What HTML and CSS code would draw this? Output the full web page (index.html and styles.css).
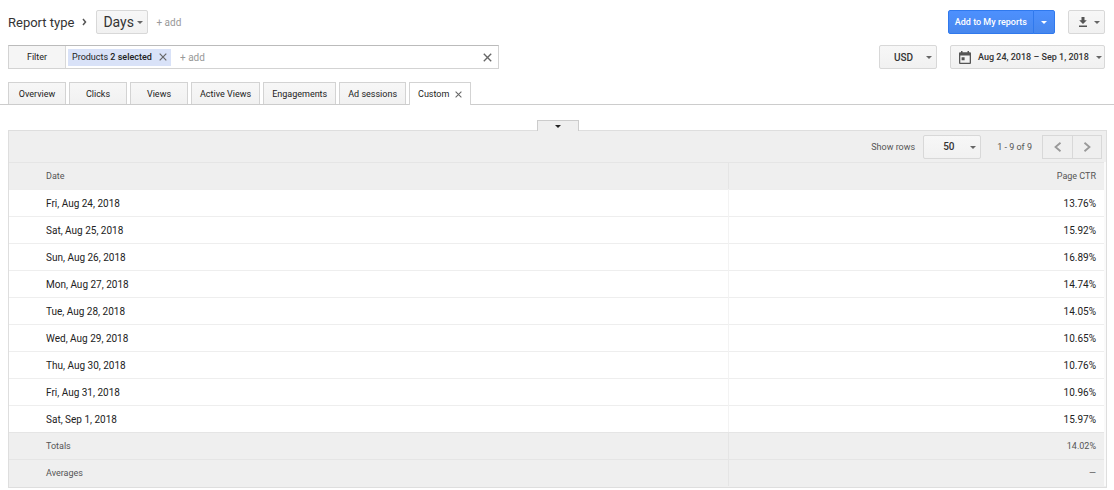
FILE: index.html
```html
<!DOCTYPE html>
<html lang="en">
<head>
    <meta charset="UTF-8">
    <meta name="viewport" content="width=device-width, initial-scale=1.0">
    <title>Report - Days</title>
    <link rel="stylesheet" href="styles.css">
</head>
<body>
    <header class="bar report-bar">
        <div class="report-type">
            <label for="reportType">Report type</label>
            <svg class="crumb" width="5" height="8" viewBox="0 0 5 8"><path d="M1 1L3.5 4L1 7"/></svg>
            <span class="select days">
                <select id="reportType"><option>Days</option></select>
            </span>
            <button class="add">+ add</button>
        </div>
        <div class="actions">
            <div class="split-btn">
                <button class="primary">Add to My reports</button>
                <button class="primary more" aria-label="More options"><span class="caret"></span></button>
            </div>
            <button class="btn download" aria-label="Download">
                <svg width="10" height="10" viewBox="0 0 10 10"><path d="M3.5 0h3v3.2h2.3L5 7 1.2 3.2h2.3zM1 8.6h8V10H1z"/></svg>
                <span class="caret"></span>
            </button>
        </div>
    </header>

    <div class="bar filter-bar">
        <div class="filter">
            <label class="filter-label" for="filterText">Filter</label>
            <span class="chip">
                <span>Products <b>2 selected</b></span>
                <button class="close" aria-label="Remove Products"><svg width="8" height="8" viewBox="0 0 8 8"><path d="M0.7 0.7L7.3 7.3M7.3 0.7L0.7 7.3"/></svg></button>
            </span>
            <input id="filterText" class="filter-input" type="text" placeholder="+ add">
            <button class="close clear" aria-label="Clear filter"><svg width="9" height="9" viewBox="0 0 8 8"><path d="M0.7 0.7L7.3 7.3M7.3 0.7L0.7 7.3"/></svg></button>
        </div>
        <div class="range">
            <span class="select currency">
                <select aria-label="Currency"><option>USD</option></select>
            </span>
            <button class="btn dates">
                <svg width="12" height="13" viewBox="0 0 12 13"><path fill-rule="evenodd" d="M2 0h1.5v1.3h5V0H10v1.3h1q1 0 1 1V12q0 1-1 1H1q-1 0-1-1V2.300q0-1 1-1h1zM1.300 4.500v7.200h9.400V4.500zM2.600 6.200h3v3h-3z"/></svg>
                <span>Aug 24, 2018 – Sep 1, 2018</span>
                <span class="caret"></span>
            </button>
        </div>
    </div>

    <nav class="tabs">
        <button class="tab">Overview</button>
        <button class="tab">Clicks</button>
        <button class="tab">Views</button>
        <button class="tab">Active Views</button>
        <button class="tab">Engagements</button>
        <button class="tab">Ad sessions</button>
        <div class="tab active">
            <span>Custom</span>
            <button class="close" aria-label="Close Custom"><svg width="7" height="7" viewBox="0 0 8 8"><path d="M0.7 0.7L7.3 7.3M7.3 0.7L0.7 7.3"/></svg></button>
        </div>
    </nav>

    <main class="report">
        <button class="expander" aria-label="Show chart"><span class="caret"></span></button>
        <div class="panel">
            <div class="pager">
                <label for="rowCount">Show rows</label>
                <span class="select rows">
                    <select id="rowCount"><option>50</option></select>
                </span>
                <span class="count">1 - 9 of 9</span>
                <div class="pages">
                    <button aria-label="Previous page"><svg width="8" height="10" viewBox="0 0 8 10"><path d="M6.500 0.700L1.500 5L6.500 9.300"/></svg></button>
                    <button aria-label="Next page"><svg width="8" height="10" viewBox="0 0 8 10"><path d="M1.500 0.700L6.500 5L1.500 9.300"/></svg></button>
                </div>
            </div>
            <div class="table-wrap">
                <table>
                    <thead>
                        <tr><th>Date</th><th>Page CTR</th></tr>
                    </thead>
                    <tbody>
                        <tr><td>Fri, Aug 24, 2018</td><td>13.76%</td></tr>
                        <tr><td>Sat, Aug 25, 2018</td><td>15.92%</td></tr>
                        <tr><td>Sun, Aug 26, 2018</td><td>16.89%</td></tr>
                        <tr><td>Mon, Aug 27, 2018</td><td>14.74%</td></tr>
                        <tr><td>Tue, Aug 28, 2018</td><td>14.05%</td></tr>
                        <tr><td>Wed, Aug 29, 2018</td><td>10.65%</td></tr>
                        <tr><td>Thu, Aug 30, 2018</td><td>10.76%</td></tr>
                        <tr><td>Fri, Aug 31, 2018</td><td>10.96%</td></tr>
                        <tr><td>Sat, Sep 1, 2018</td><td>15.97%</td></tr>
                    </tbody>
                    <tfoot>
                        <tr><td>Totals</td><td>14.02%</td></tr>
                        <tr><td>Averages</td><td>—</td></tr>
                    </tfoot>
                </table>
            </div>
        </div>
    </main>
</body>
</html>
```
FILE: styles.css
```css
* {
    box-sizing: border-box;
}

body {
    margin: 0;
    padding-top: 10px;
    font-family: Roboto, Arial, sans-serif;
    font-size: 9px;
    color: #222;
    background-color: #fff;
}

button,
input,
select {
    margin: 0;
    padding: 0;
    border: none;
    background: none;
    font: inherit;
    color: inherit;
}

button {
    cursor: pointer;
    white-space: nowrap;
}

svg {
    display: block;
    flex: none;
}

b {
    font-weight: 500;
}

.caret {
    border: 3px solid transparent;
    border-top-color: #666;
    border-bottom: none;
}

.bar {
    display: flex;
    justify-content: space-between;
    padding: 0 9px 0 8px;
}

.report-bar {
    margin-bottom: 11px;
}

.report-type,
.actions,
.range,
.split-btn {
    display: flex;
    align-items: center;
}

.report-type {
    font-size: 13px;
    color: #333;
}

.crumb {
    margin: 0 9px 0 8px;
    fill: none;
    stroke: #555;
    stroke-width: 1.5;
}

/* Buttons and drop-downs */
.btn,
.select {
    height: 24px;
    border: 1px solid #d8d8d8;
    border-radius: 2px;
    background: linear-gradient(#f7f7f7, #f1f1f1);
}

.btn {
    display: flex;
    align-items: center;
}

.select {
    position: relative;
    display: block;
    font-size: 10px;
}

.select select {
    width: 100%;
    height: 100%;
    appearance: none;
    cursor: pointer;
}

.select::after {
    content: "";
    position: absolute;
    right: 4px;
    top: 10px;
    border: 3px solid transparent;
    border-top-color: #666;
    border-bottom: none;
    pointer-events: none;
}

.days {
    width: 52px;
    font-size: 14px;
}

.days select {
    padding-left: 6px;
}

.add {
    margin-left: 8px;
    font-size: 10px;
    color: #999;
}

.primary {
    height: 24px;
    padding: 0 6px;
    border: 1px solid #3079ed;
    border-radius: 2px 0 0 2px;
    background: linear-gradient(#4d90fe, #4787ed);
    color: #fff;
    font-weight: 500;
}

.primary.more {
    display: flex;
    align-items: center;
    justify-content: center;
    width: 22px;
    margin-left: -1px;
    border-radius: 0 2px 2px 0;
}

.primary .caret {
    border-top-color: #fff;
}

.download {
    justify-content: space-between;
    width: 37px;
    margin-left: 13px;
    padding: 0 4px 0 9px;
}

.btn svg {
    fill: #555;
}

/* Filter row */
.filter-bar {
    margin-bottom: 13px;
}

.filter {
    display: flex;
    align-items: center;
    width: 491px;
    height: 24px;
    border: 1px solid #d3d3d3;
    border-top-color: #bbb;
}

.filter-label {
    width: 57px;
    height: 100%;
    border-right: 1px solid #d8d8d8;
    background-color: #f5f5f5;
    line-height: 22px;
    text-align: center;
}

.chip {
    display: flex;
    align-items: center;
    justify-content: space-between;
    width: 103px;
    height: 17px;
    margin-left: 2px;
    padding: 0 4px;
    background-color: #d9e2f8;
    white-space: nowrap;
}

.close svg {
    fill: none;
    stroke: #666;
    stroke-width: 1.2;
}

.filter-input {
    flex: 1;
    min-width: 0;
    margin-left: 9px;
    font-size: 10px;
}

.filter-input::placeholder {
    color: #999;
    opacity: 1;
}

.clear {
    margin-right: 6px;
}

.range {
    color: #333;
    font-weight: 500;
}

.currency {
    width: 58px;
}

.currency select {
    padding-left: 14px;
}

.dates {
    gap: 7px;
    width: 155px;
    margin-left: 13px;
    padding: 0 4px 0 8px;
}

.dates .caret {
    margin-left: auto;
}

/* Tabs */
.tabs {
    display: flex;
    gap: 3px;
    height: 23px;
    padding-left: 8px;
    border-bottom: 1px solid #ccc;
}

.tab {
    height: 22px;
    min-width: 58px;
    padding: 0 8px;
    border: 1px solid #d3d3d3;
    border-bottom: none;
    background: linear-gradient(#f7f7f7, #f1f1f1);
}

.tab.active {
    display: flex;
    align-items: center;
    gap: 6px;
    height: 23px;
    background: #fff;
}

/* Report table */
.report {
    padding: 15px 7px 0 8px;
}

.expander {
    position: relative;
    display: flex;
    justify-content: center;
    width: 42px;
    height: 11px;
    margin: 0 auto -1px;
    padding-top: 4px;
    border: 1px solid #ccc;
    border-bottom: none;
    background-color: #efefef;
}

.expander .caret {
    border-top-color: #222;
}

.panel {
    padding-bottom: 1px;
    border: 1px solid #dedede;
    background-color: #efefef;
}

.pager {
    display: flex;
    align-items: center;
    justify-content: flex-end;
    height: 31px;
    padding-right: 4px;
    color: #555;
}

.rows {
    width: 58px;
    margin: 0 16px 0 8px;
    color: #333;
    font-weight: 500;
}

.rows select {
    padding-left: 19px;
}

.pages {
    display: flex;
    margin-left: 10px;
}

.pages button {
    display: flex;
    align-items: center;
    justify-content: center;
    width: 31px;
    height: 24px;
    border: 1px solid #d8d8d8;
}

.pages button + button {
    width: 30px;
    margin-left: -1px;
}

.pages svg {
    fill: none;
    stroke: #999;
    stroke-width: 1.8;
}

.table-wrap {
    padding-right: 2px;
    background-color: #fafafa;
}

table {
    width: 100%;
    border-collapse: separate;
    border-spacing: 0;
    background-color: #fff;
    font-size: 10px;
}

th,
td {
    height: 27px;
    padding: 0 8px 0 37px;
    border-top: 1px solid #eee;
    text-align: left;
}

th:first-child {
    width: 719px;
}

th:last-child,
td:last-child {
    padding-left: 0;
    border-left: 1px solid #f3f3f3;
    text-align: right;
}

th {
    border-color: #e5e5e5;
    font-weight: 400;
}

th,
tfoot td {
    background-color: #efefef;
    font-size: 9px;
    color: #555;
}

th:last-child,
tfoot td,
tfoot td:last-child {
    border-color: #e5e5e5;
}
```
